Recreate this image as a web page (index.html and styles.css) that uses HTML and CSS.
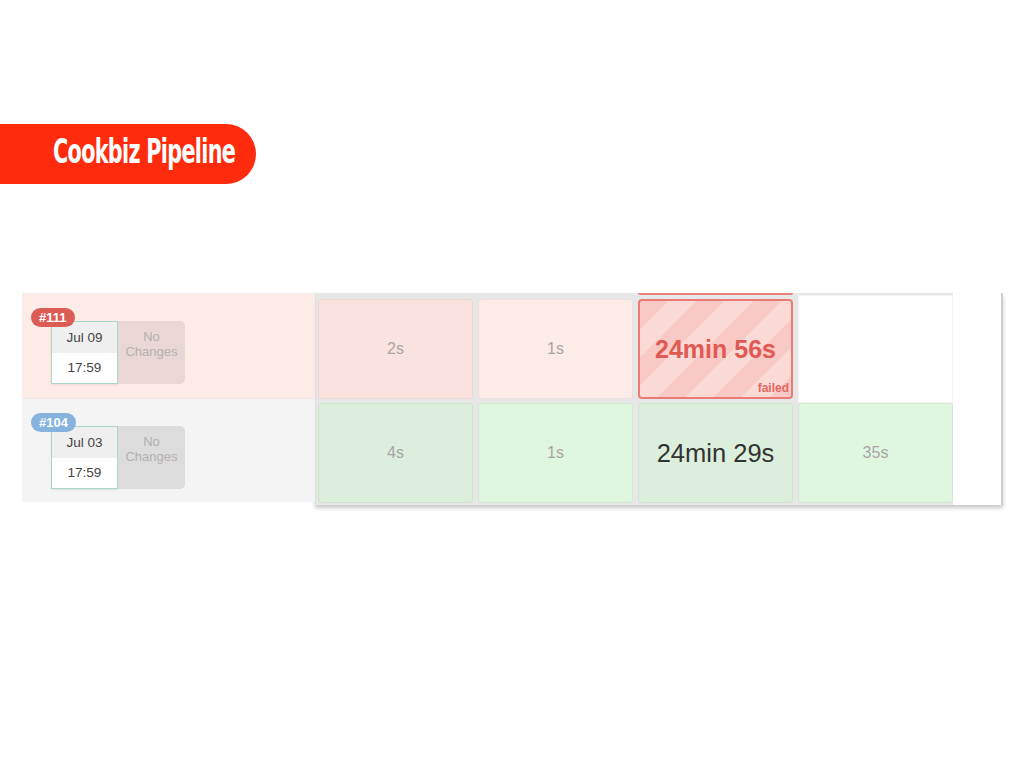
FILE: index.html
```html
<!DOCTYPE html>
<html lang="en">

<head>
  <meta charset="UTF-8">
  <meta name="viewport" content="width=device-width, initial-scale=1.0">
  <title>Cookbiz Pipeline</title>
  <link rel="stylesheet" href="styles.css">
</head>

<body>
  <div class="banner">
    <h1 class="banner-title">Cookbiz Pipeline</h1>
  </div>

  <div class="pipeline">
    <div class="builds">
      <div class="build build-failed">
        <span class="badge badge-red">#111</span>
        <div class="date-box">
          <div class="date">Jul 09</div>
          <div class="time">17:59</div>
        </div>
        <div class="changes changes-red">No<br>Changes</div>
      </div>
      <div class="build build-ok">
        <span class="badge badge-blue">#104</span>
        <div class="date-box">
          <div class="date">Jul 03</div>
          <div class="time">17:59</div>
        </div>
        <div class="changes changes-gray">No<br>Changes</div>
      </div>
    </div>

    <div class="stages">
      <div class="grid">
        <div class="peek"></div>

        <div class="cell red-dark">2s</div>
        <div class="cell red-light">1s</div>
        <div class="cell failed">
          <span class="big">24min 56s</span>
          <span class="failed-label">failed</span>
        </div>
        <div class="cell empty"></div>

        <div class="cell green-dark">4s</div>
        <div class="cell green-light">1s</div>
        <div class="cell green-dark"><span class="big dark">24min 29s</span></div>
        <div class="cell green-light">35s</div>
      </div>
      <div class="filler"></div>
    </div>
  </div>
</body>

</html>
```

FILE: styles.css
```css
* {
  box-sizing: border-box;
}

html,
body {
  width: 100%;
  height: 100%;
  margin: 0;
}

body {
  font-family: "Liberation Sans", Arial, sans-serif;
  background: #fff;
}

/* title banner */
.banner {
  margin-top: 124px;
  width: 256px;
  height: 60px;
  background-color: #ff2b0c;
  border-radius: 0 30px 30px 0;
  display: flex;
  align-items: center;
  padding: 0 0 5px 53px;
}

.banner-title {
  margin: 0;
  color: #fff;
  font-family: "DejaVu Sans Condensed", "DejaVu Sans", sans-serif;
  font-weight: bold;
  font-size: 33px;
  letter-spacing: -1px;
  white-space: nowrap;
  transform: scaleX(0.7);
  transform-origin: left center;
}

/* pipeline table */
.pipeline {
  display: flex;
  margin: 109px 0 0 22px;
}

.builds {
  width: 293px;
  display: flex;
  flex-direction: column;
}

.build {
  position: relative;
  height: 105px;
  display: flex;
  padding: 27px 0 0 29px;
  border-top: 1px solid #ececec;
}

.build-failed {
  background-color: #fdebe7;
}

.build-ok {
  background-color: #f4f4f4;
  border-top-color: #f2e4e2;
  height: 104px;
}

.badge {
  position: absolute;
  top: 14px;
  left: 9px;
  z-index: 1;
  padding: 2px 8px;
  border-radius: 10px;
  color: #fff;
  font-size: 13px;
  font-weight: bold;
  line-height: 15px;
}

.badge-red {
  background-color: #db5b55;
}

.badge-blue {
  background-color: #86b3dd;
}

.date-box {
  width: 67px;
  height: 63px;
  border: 1px solid #a9d6c6;
  box-shadow: 0 1px 2px rgba(0, 0, 0, 0.08);
  font-size: 13.5px;
  color: #444;
  text-align: center;
}

.date {
  height: 31px;
  line-height: 31px;
  background-color: #efefef;
}

.time {
  height: 30px;
  line-height: 30px;
  background-color: #fff;
}

.changes {
  width: 67px;
  height: 63px;
  border-radius: 0 5px 5px 0;
  text-align: center;
  font-size: 13px;
  line-height: 15px;
  padding-top: 8px;
  color: #b4b0b0;
}

.changes-red {
  background-color: #e9d7d5;
}

.changes-gray {
  background-color: #dcdcdc;
}

/* stage columns */
.stages {
  display: flex;
  width: 688px;
  border-left: 1px solid #dedede;
  border-right: 2px solid #cfcfcf;
  box-shadow: 0 3px 4px rgba(0, 0, 0, 0.22);
}

.grid {
  display: grid;
  grid-template-columns: repeat(4, 155px);
  grid-template-rows: 2px 100px 100px;
  gap: 4px 5px;
  padding: 0 0 2px 2px;
  background-color: #e7e7e7;
}

.filler {
  flex: 1;
  background-color: #fff;
}

.peek {
  grid-column: 3;
  background-color: #ea807a;
  border-radius: 0 0 3px 3px;
}

.peek+.cell {
  grid-column: 1;
}

.cell {
  border-radius: 4px;
  border: 1px solid rgba(0, 0, 0, 0.05);
  display: flex;
  align-items: center;
  justify-content: center;
  position: relative;
  font-size: 16px;
  color: #a9a4a4;
}

.red-dark {
  background-color: #fae3df;
}

.red-light {
  background-color: #fdebe7;
}

.green-dark {
  background-color: #dcefdc;
}

.green-light {
  background-color: #dff6df;
}

.empty {
  background-color: #fff;
  border-radius: 0;
  border-color: #f3f3f3;
  margin: -4px 0 -4px 0;
}

.failed {
  border: 2px solid #ea7a74;
  background: repeating-linear-gradient(135deg, #f9c9c5 0, #f9c9c5 20px, #fbd9d5 20px, #fbd9d5 40px);
}

.big {
  font-size: 25px;
  font-weight: bold;
  color: #e15953;
}

.big.dark {
  font-size: 25.5px;
  font-weight: normal;
  color: #333;
}

.failed-label {
  position: absolute;
  right: 2px;
  bottom: 2px;
  font-size: 12px;
  font-weight: bold;
  color: #e46660;
}
```
